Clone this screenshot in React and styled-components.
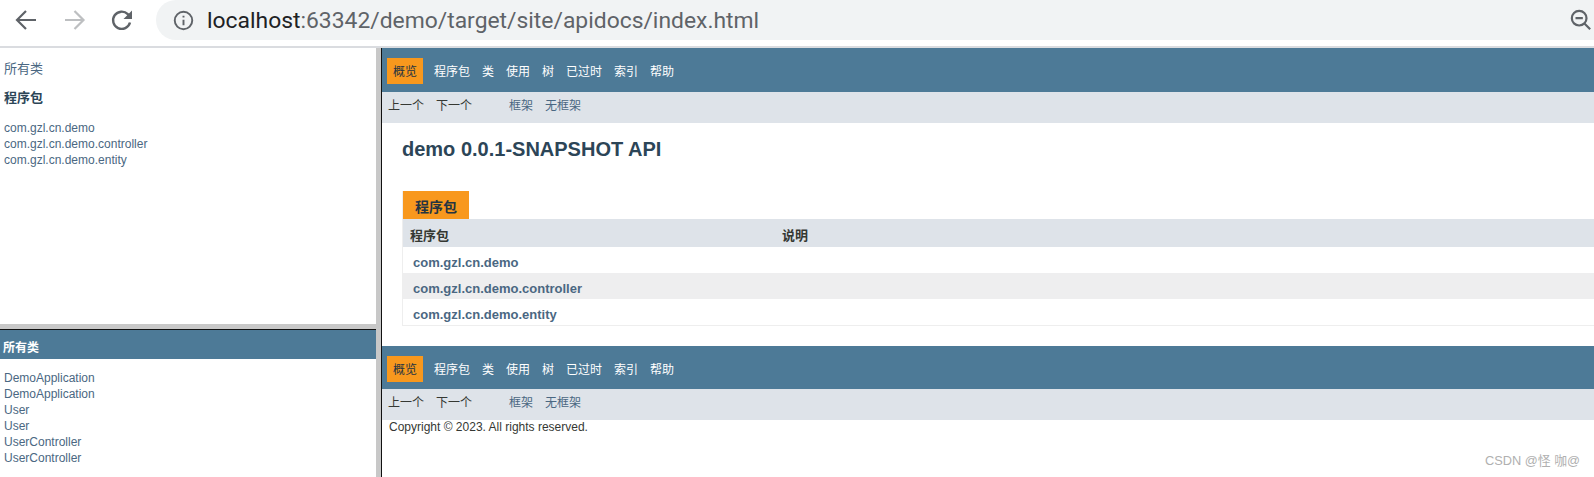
import styled, { createGlobalStyle } from "styled-components";

const GlobalStyle = createGlobalStyle`
  html, body {
    margin: 0;
    padding: 0;
    background: #fff;
    overflow: hidden;
  }
`;

const navItems = ["程序包", "类", "使用", "树", "已过时", "索引", "帮助"];
const packages = ["com.gzl.cn.demo", "com.gzl.cn.demo.controller", "com.gzl.cn.demo.entity"];
const classes = ["DemoApplication", "DemoApplication", "User", "User", "UserController", "UserController"];

function DocNav({ height }) {
  return (
    <>
      <TopNav $height={height}>
        <NavActive>概览</NavActive>
        {navItems.map((item) => (
          <NavItem key={item}>{item}</NavItem>
        ))}
      </TopNav>
      <SubNav>
        <SubLink>上一个</SubLink>
        <SubLink>下一个</SubLink>
        <SubLink $muted $gap={37}>框架</SubLink>
        <SubLink $muted>无框架</SubLink>
      </SubNav>
    </>
  );
}

function App() {
  return (
    <Page>
      <GlobalStyle />
      <Toolbar>
        <NavIcons>
          <svg width="24" height="24" viewBox="0 0 24 24" fill="none" stroke="#5f6368" strokeWidth="2.2">
            <path d="M22 12H4M12 3l-9 9 9 9" />
          </svg>
          <svg width="24" height="24" viewBox="0 0 24 24" fill="none" stroke="#bdbfc1" strokeWidth="2.2">
            <path d="M3 12h18M12.500 3l9 9-9 9" />
          </svg>
          <svg width="24" height="24" viewBox="0 0 24 24" fill="none" stroke="#5f6368" strokeWidth="2.4">
            <path d="M20 14.500A8.600 8.600 0 1 1 17.800 6.200L20 8.500" />
            <path d="M22 2.500V11h-8.500z" fill="#5f6368" stroke="none" />
          </svg>
        </NavIcons>
        <AddressBar>
          <svg width="21" height="21" viewBox="0 0 24 24" fill="none" stroke="#5f6368" strokeWidth="2.200">
            <circle cx="12" cy="12" r="10" />
            <path d="M12 11v6.500M12 6.500v2.200" />
          </svg>
          <Url>
            <UrlHost>localhost</UrlHost>:63342/demo/target/site/apidocs/index.html
          </Url>
          <ZoomIcon width="22" height="22" viewBox="0 0 24 24" fill="none" stroke="#5f6368" strokeWidth="2.400">
            <circle cx="10" cy="10" r="8" />
            <path d="M6 10h8M16 16l6 6" />
          </ZoomIcon>
        </AddressBar>
      </Toolbar>
      <ChromeLine />
      <Frames>
        <LeftColumn>
          <TopFrame>
            <AllClasses>所有类</AllClasses>
            <FrameTitle>程序包</FrameTitle>
            <LinkList $top={15}>
              {packages.map((item) => (
                <li key={item}>{item}</li>
              ))}
            </LinkList>
          </TopFrame>
          <FrameSplitH />
          <BottomFrame>
            <ClassesHeader>所有类</ClassesHeader>
            <LinkList $top={11}>
              {classes.map((item, i) => (
                <li key={i}>{item}</li>
              ))}
            </LinkList>
          </BottomFrame>
        </LeftColumn>
        <FrameSplitV />
        <Main>
          <DocNav height={44} />
          <Heading>demo 0.0.1-SNAPSHOT API</Heading>
          <Summary>
            <Caption>程序包</Caption>
            <HeadRow>
              <PackageHead>程序包</PackageHead>
              <span>说明</span>
            </HeadRow>
            {packages.map((item, i) => (
              <PackageRow key={item} $alt={i % 2 === 1}>
                {item}
              </PackageRow>
            ))}
          </Summary>
          <BottomNav>
            <DocNav height={43} />
          </BottomNav>
          <Legal>Copyright © 2023. All rights reserved.</Legal>
          <Watermark>CSDN @怪 咖@</Watermark>
        </Main>
      </Frames>
    </Page>
  );
}

export default App;

const Page = styled.div`
  width: 1594px;
  height: 477px;
  display: flex;
  flex-direction: column;
  overflow: hidden;
  font-family: "Liberation Sans", "Noto Sans CJK SC", sans-serif;
`;
const Toolbar = styled.div`
  height: 46px;
  flex: none;
  display: flex;
  align-items: flex-start;
`;
const NavIcons = styled.div`
  width: 156px;
  height: 40px;
  flex: none;
  display: flex;
  align-items: center;
  gap: 24px;
  padding-left: 14px;
  box-sizing: border-box;
`;
const AddressBar = styled.div`
  flex: 1;
  height: 40px;
  display: flex;
  align-items: center;
  padding: 0 2px 0 17px;
  gap: 13px;
  background: #f1f3f4;
  border-radius: 20px 0 0 20px;
`;
const Url = styled.div`
  font-family: Roboto, sans-serif;
  font-size: 22.87px;
  color: #5f6368;
`;
const UrlHost = styled.span`
  color: #202124;
`;
const ZoomIcon = styled.svg`
  margin-left: auto;
`;
const ChromeLine = styled.div`
  height: 2px;
  flex: none;
  background: #dadce0;
`;
const Frames = styled.div`
  flex: 1;
  display: flex;
  min-height: 0;
`;
const LeftColumn = styled.div`
  width: 376px;
  flex: none;
  display: flex;
  flex-direction: column;
`;
const TopFrame = styled.div`
  height: 276px;
  flex: none;
  padding-top: 13px;
  box-sizing: border-box;
`;
const AllClasses = styled.div`
  font-size: 13px;
  line-height: 15px;
  color: #4a6782;
  padding-left: 4px;
`;
const FrameTitle = styled.div`
  font-size: 13px;
  font-weight: 700;
  line-height: 15px;
  color: #2c4557;
  padding: 14px 0 0 4px;
`;
const LinkList = styled.ul`
  list-style: none;
  margin: 0;
  padding: ${(p) => p.$top}px 0 0 4px;
  font-size: 12px;
  line-height: 16px;
  color: #4a6782;
`;
const FrameSplitH = styled.div`
  height: 6px;
  flex: none;
  background: #c8c8c8;
  border-bottom: 1px solid #111;
  box-sizing: border-box;
`;
const BottomFrame = styled.div`
  flex: 1;
`;
const ClassesHeader = styled.div`
  height: 29px;
  line-height: 37px;
  padding-left: 3px;
  font-size: 12px;
  font-weight: 700;
  color: #fff;
  background: #4d7a97;
`;
const FrameSplitV = styled.div`
  width: 6px;
  flex: none;
  background: #c8c8c8;
  border-right: 1px solid #111;
  box-sizing: border-box;
`;
const Main = styled.div`
  flex: 1;
  position: relative;
  min-width: 0;
`;
const TopNav = styled.div`
  height: ${(p) => p.$height}px;
  box-sizing: border-box;
  display: flex;
  align-items: flex-start;
  padding: 10px 0 0 5px;
  gap: 12px;
  background: #4d7a97;
  font-size: 12px;
  color: #fff;
`;
const NavActive = styled.div`
  width: 36px;
  height: 26px;
  line-height: 29px;
  text-align: center;
  margin-right: -1px;
  background: #f8981d;
  color: #253441;
`;
const NavItem = styled.div`
  line-height: 28px;
`;
const SubNav = styled.div`
  height: 31px;
  box-sizing: border-box;
  display: flex;
  align-items: center;
  padding: 0 0 6px 6px;
  gap: 12px;
  background: #dee3e9;
  font-size: 12px;
`;
const SubLink = styled.span`
  color: ${(p) => (p.$muted ? "#4a6782" : "#353833")};
  margin-left: ${(p) => (p.$gap ? p.$gap - 12 : 0)}px;
`;
const Heading = styled.h1`
  margin: 0;
  padding: 15px 0 0 20px;
  font-size: 20px;
  line-height: 23px;
  color: #2c4557;
`;
const Summary = styled.div`
  margin: 30px 0 0 20px;
  border-bottom: 1px solid #eee;
  border-left: 1px solid #eee;
`;
const Caption = styled.div`
  width: 66px;
  height: 28px;
  line-height: 33px;
  text-align: center;
  background: #f8981d;
  color: #253441;
  font-size: 14px;
  font-weight: 700;
`;
const HeadRow = styled.div`
  height: 28px;
  line-height: 33px;
  display: flex;
  align-items: flex-start;
  background: #dee3e9;
  font-size: 13px;
  font-weight: 700;
  color: #353833;
  padding-left: 7px;
`;
const PackageHead = styled.span`
  width: 372px;
`;
const PackageRow = styled.div`
  height: 26px;
  line-height: 31px;
  padding-left: 10px;
  background: ${(p) => (p.$alt ? "#eeeeef" : "#fff")};
  font-size: 13px;
  font-weight: 700;
  color: #4a6782;
`;
const BottomNav = styled.div`
  margin-top: 20px;
`;
const Legal = styled.div`
  padding: 0 0 0 7px;
  font-size: 12px;
  line-height: 14px;
  color: #353833;
`;
const Watermark = styled.div`
  position: absolute;
  right: 14px;
  bottom: 8px;
  font-size: 12.8px;
  color: #b0b0b0;
`;
